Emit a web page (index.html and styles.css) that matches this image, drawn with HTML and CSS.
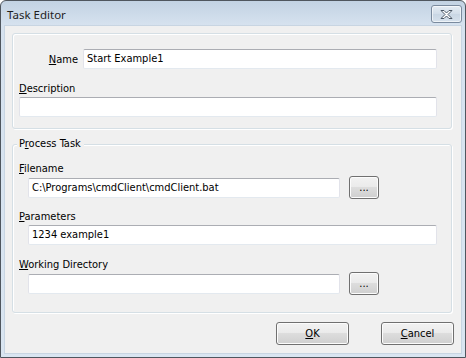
FILE: index.html
```html
<!DOCTYPE html>
<html>
<head>
<meta charset="utf-8">
<title>Task Editor</title>
<link rel="stylesheet" href="styles.css">
</head>
<body>
<div class="window">
  <div class="titlebar">
    <span class="title">Task Editor</span>
    <button class="close" aria-label="Close">
      <svg width="17" height="11" viewBox="0 0 17 11">
        <path d="M3 1.5 L6 1.5 L8.5 4 L11 1.5 L14 1.5 L10 5.5 L14 9.5 L11 9.5 L8.5 7 L6 9.5 L3 9.5 L7 5.5 Z" fill="#ffffff" stroke="#4b5867" stroke-width="1" stroke-linejoin="round"/>
      </svg>
    </button>
  </div>
  <div class="client">
    <div class="group group-top">
      <div class="name-row">
        <label class="name-label"><u>N</u>ame</label>
        <div class="textbox wide">Start Example1</div>
      </div>
      <label class="lbl desc-label"><u>D</u>escription</label>
      <div class="textbox full"></div>
    </div>

    <div class="group group-proc">
      <span class="legend">P<u>r</u>ocess Task</span>
      <label class="lbl first"><u>F</u>ilename</label>
      <div class="browse-row">
        <div class="textbox short">C:\Programs\cmdClient\cmdClient.bat</div>
        <button class="btn dots">...</button>
      </div>
      <label class="lbl mid"><u>P</u>arameters</label>
      <div class="textbox indent">1234 example1</div>
      <label class="lbl last"><u>W</u>orking Directory</label>
      <div class="browse-row">
        <div class="textbox short"></div>
        <button class="btn dots">...</button>
      </div>
    </div>

    <div class="actions">
      <button class="btn action"><u>O</u>K</button>
      <button class="btn action"><u>C</u>ancel</button>
    </div>
  </div>
</div>
</body>
</html>
```
FILE: styles.css
```css
* { box-sizing: border-box; }
html, body { margin: 0; padding: 0; }
body {
  width: 466px;
  height: 358px;
  overflow: hidden;
  font-family: "DejaVu Sans Condensed", "DejaVu Sans", sans-serif;
  font-size: 11px;
  color: #000;
}
u { text-decoration: underline; text-underline-offset: 1px; }

.window {
  width: 466px;
  height: 358px;
  border: 1px solid #4f565e;
  border-radius: 6px 6px 0 0;
  background: linear-gradient(#c2d2e3 0px, #d6e2ef 24px, #d9e5f1 100%);
  display: flex;
  flex-direction: column;
  padding: 0 3px 3px 3px;
}

.titlebar {
  height: 24px;
  flex: none;
  display: flex;
  align-items: flex-start;
  justify-content: space-between;
  padding-left: 3px;
  padding-right: 0;
}
.title {
  font-family: "Noto Sans", "DejaVu Sans", sans-serif;
  font-size: 11.5px;
  line-height: 14px;
  margin-top: 7px;
  color: #1e1e1e;
}
.close {
  margin-top: 4px;
  width: 31px;
  height: 18px;
  border: 1px solid #7a8a9e;
  border-radius: 3px;
  background: linear-gradient(#e4ecf4, #d2dde9 50%, #c9d6e4 51%, #d6e1ec);
  box-shadow: inset 0 0 0 1px rgba(255,255,255,0.6);
  padding: 0;
  display: flex;
  align-items: center;
  justify-content: center;
}
.close svg { display: block; }

.client {
  flex: 1;
  background: #f0f0f0;
  border: 1px solid #c8d5e2;
  padding: 7px 7px 0 7px;
  display: flex;
  flex-direction: column;
}

.group {
  border: 1px solid #d5dfe5;
  box-shadow: inset 1px 1px 0 #fff, 1px 1px 0 #fff;
  border-radius: 3px;
  margin-right: 2px;
  padding-left: 6px;
  padding-right: 14px;
  display: flex;
  flex-direction: column;
}
.group-top {
  height: 96px;
  padding-top: 15px;
}
.group-proc {
  position: relative;
  margin-top: 15px;
  height: 169px;
  padding-top: 17px;
}
.legend {
  position: absolute;
  left: 4px;
  top: -8px;
  padding: 0 3px 0 2px;
  background: #f0f0f0;
  line-height: 14px;
}

.name-row {
  display: flex;
  align-items: center;
}
.name-label {
  width: 64px;
  text-align: right;
  padding-right: 5px;
  line-height: 13px;
}
.lbl {
  display: block;
  line-height: 13px;
  height: 13px;
}
.desc-label { margin-top: 13px; }
.lbl.mid { margin-top: 11px; }
.lbl.last { margin-top: 13px; }

.textbox {
  height: 20px;
  background: #fff;
  border: 1px solid #e2e3ea;
  border-top-color: #abadb3;
  border-bottom-color: #e3e9ef;
  border-radius: 2px;
  padding: 0 3px;
  line-height: 18px;
  white-space: nowrap;
  overflow: hidden;
}
.textbox.wide { flex: 1; }
.textbox.full { margin-top: 2px; }
.textbox.indent { margin-left: 9px; margin-top: 2px; }

.browse-row {
  display: flex;
  align-items: center;
  margin-top: 1px;
  margin-left: 9px;
  gap: 9px;
}
.textbox.short { width: 312px; }

.btn {
  font-family: "DejaVu Sans Condensed", "DejaVu Sans", sans-serif;
  font-size: 11px;
  color: #000;
  border: 1px solid #707070;
  border-radius: 3px;
  background: linear-gradient(#f2f2f2 0%, #ebebeb 45%, #dddddd 50%, #cfcfcf 100%);
  box-shadow: inset 0 0 0 1px #fcfcfc;
  padding: 0;
  height: 23px;
}
.dots {
  width: 30px;
  line-height: 21px;
  letter-spacing: 0;
}

.actions {
  display: flex;
  justify-content: flex-end;
  gap: 32px;
  margin-top: 9px;
}
.action {
  width: 73px;
}
```
